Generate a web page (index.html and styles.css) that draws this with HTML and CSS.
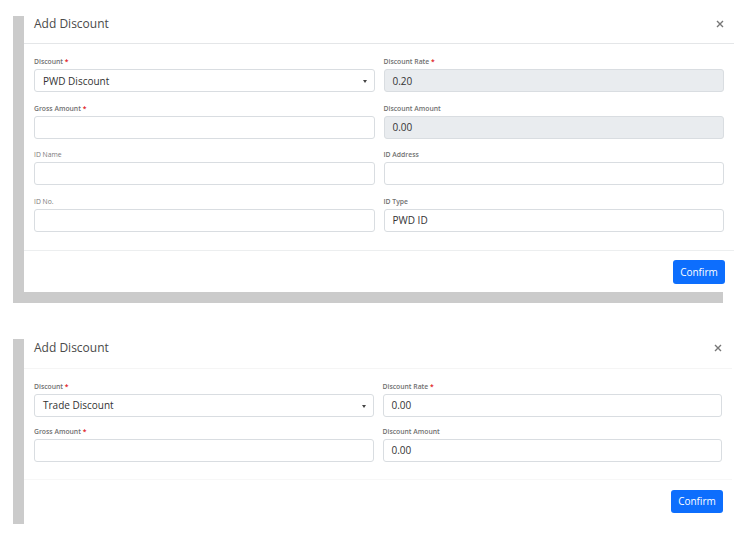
FILE: index.html
```html
<!DOCTYPE html>
<html>
<head>
<meta charset="utf-8">
<link rel="stylesheet" href="styles.css">
</head>
<body>
<div class="page">
  <div class="modal modal-one">
    <div class="modal-header">
      <div class="modal-title">Add Discount</div>
      <span class="close"><svg width="8" height="8" viewBox="0 0 8 8"><path d="M1 1L7 7M7 1L1 7" stroke="#777" stroke-width="1.4"/></svg></span>
    </div>
    <div class="modal-body">
      <div class="field">
        <div class="label">Discount <span class="req">*</span></div>
        <div class="control select">PWD Discount<span class="caret"></span></div>
      </div>
      <div class="field">
        <div class="label">Discount Rate <span class="req">*</span></div>
        <div class="control readonly">0.20</div>
      </div>
      <div class="field">
        <div class="label">Gross Amount <span class="req">*</span></div>
        <div class="control"></div>
      </div>
      <div class="field">
        <div class="label">Discount Amount</div>
        <div class="control readonly">0.00</div>
      </div>
      <div class="field">
        <div class="label light">ID Name</div>
        <div class="control"></div>
      </div>
      <div class="field">
        <div class="label">ID Address</div>
        <div class="control"></div>
      </div>
      <div class="field">
        <div class="label light">ID No.</div>
        <div class="control"></div>
      </div>
      <div class="field">
        <div class="label">ID Type</div>
        <div class="control">PWD ID</div>
      </div>
    </div>
    <div class="modal-footer">
      <button class="btn">Confirm</button>
    </div>
  </div>

  <div class="modal modal-two">
    <div class="modal-header">
      <div class="modal-title">Add Discount</div>
      <span class="close"><svg width="8" height="8" viewBox="0 0 8 8"><path d="M1 1L7 7M7 1L1 7" stroke="#777" stroke-width="1.4"/></svg></span>
    </div>
    <div class="modal-body">
      <div class="field">
        <div class="label">Discount <span class="req">*</span></div>
        <div class="control select">Trade Discount<span class="caret"></span></div>
      </div>
      <div class="field">
        <div class="label">Discount Rate <span class="req">*</span></div>
        <div class="control">0.00</div>
      </div>
      <div class="field">
        <div class="label">Gross Amount <span class="req">*</span></div>
        <div class="control"></div>
      </div>
      <div class="field">
        <div class="label">Discount Amount</div>
        <div class="control">0.00</div>
      </div>
    </div>
    <div class="modal-footer">
      <button class="btn">Confirm</button>
    </div>
  </div>
</div>
</body>
</html>
```
FILE: styles.css
```css
html, body {
  margin: 0;
  padding: 0;
  background: #ffffff;
}
body {
  font-family: "Open Sans", "Noto Sans", sans-serif;
  color: #333;
}
.page {
  display: flex;
  flex-direction: column;
  padding-top: 5px;
}
.modal {
  margin-left: 24px;
  background: #fff;
  box-shadow: -11px 11px 0 #cbcbcb;
  display: flex;
  flex-direction: column;
}
.modal-one {
  width: 710px;
}
.modal-two {
  width: 708px;
  margin-top: 36px;
}
.modal-header {
  display: flex;
  align-items: center;
  justify-content: space-between;
  padding: 0 10px;
  height: 38px;
  border-bottom: 1px solid #e4e6e8;
}
.modal-two .modal-header {
  height: 40px;
  border-bottom-color: #f5f5f5;
}
.modal-title {
  font-size: 12px;
  color: #4a4a4a;
  line-height: 16px;
}
.close {
  display: flex;
  align-items: center;
  justify-content: center;
  width: 8px;
  height: 8px;
}
.modal-body {
  display: grid;
  grid-template-columns: 1fr 1fr;
  column-gap: 9px;
  row-gap: 12.5px;
  padding: 14px 10px 18px;
}
.modal-two .modal-body {
  row-gap: 11px;
  padding-bottom: 17px;
}
.field {
  display: flex;
  flex-direction: column;
  gap: 3px;
}
.label {
  font-size: 6.8px;
  line-height: 8px;
  font-weight: 600;
  color: #707070;
}
.label.light {
  font-weight: 400;
  color: #7a7a7a;
}
.req {
  color: #e0161b;
}
.control {
  position: relative;
  height: 23px;
  box-sizing: border-box;
  border: 1px solid #d9dde1;
  border-radius: 3px;
  padding: 0 8px;
  display: flex;
  align-items: center;
  font-size: 10px;
  color: #333;
  background: #fff;
}
.control.readonly {
  background: #e9ecef;
}
.caret {
  position: absolute;
  right: 7px;
  top: 10px;
  width: 0;
  height: 0;
  border-left: 2.5px solid transparent;
  border-right: 2.5px solid transparent;
  border-top: 3px solid #444;
}
.modal-footer {
  display: flex;
  justify-content: flex-end;
  padding: 9px 9px 8px;
  border-top: 1px solid #eceeef;
}
.modal-two .modal-footer {
  padding: 10px 9px 11px;
  border-top-color: #f7f7f7;
}
.btn {
  height: 24px;
  width: 52px;
  border: none;
  border-radius: 3px;
  background: #0d6efd;
  color: #fff;
  font-family: "Open Sans", "Noto Sans", sans-serif;
  font-size: 10px;
  padding: 0;
}
.modal-two .btn {
  height: 23px;
}
```
